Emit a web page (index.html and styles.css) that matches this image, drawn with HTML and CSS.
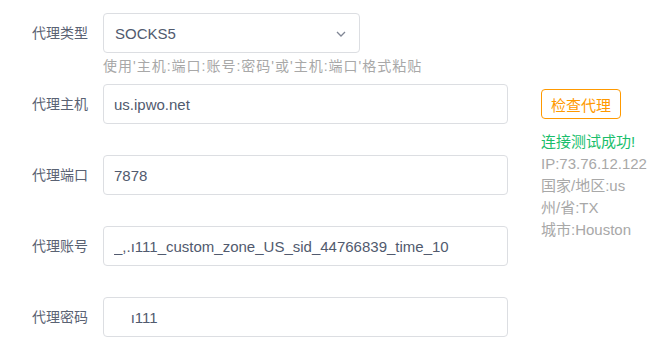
FILE: index.html
```html
<!DOCTYPE html>
<html lang="zh-CN">
<head>
  <meta charset="UTF-8" />
  <meta name="viewport" content="width=device-width, initial-scale=1.0" />
  <title>代理设置</title>
  <link rel="stylesheet" href="styles.css">
</head>
<body>
  <div class="proxy-panel">
    <form class="proxy-form">
      <div class="form-item has-hint">
        <label class="form-label">代理类型</label>
        <div class="form-field">
          <div class="select">
            <span class="select-value">SOCKS5</span>
            <svg class="select-arrow" width="10" height="6" viewBox="0 0 10 6"><path d="M1 1 L5 5 L9 1" fill="none" stroke="#808695" stroke-width="1.3"/></svg>
          </div>
          <div class="hint">使用'主机:端口:账号:密码'或'主机:端口'格式粘贴</div>
        </div>
      </div>
      <div class="form-item">
        <label class="form-label">代理主机</label>
        <input class="input" type="text" value="us.ipwo.net">
      </div>
      <div class="form-item">
        <label class="form-label">代理端口</label>
        <input class="input" type="text" value="7878">
      </div>
      <div class="form-item">
        <label class="form-label">代理账号</label>
        <input class="input" type="text" value="_,.ı111_custom_zone_US_sid_44766839_time_10">
      </div>
      <div class="form-item">
        <label class="form-label">代理密码</label>
        <input class="input" type="text" value="    ı111">
      </div>
    </form>

    <aside class="check">
      <button class="btn-check" type="button">检查代理</button>
      <div class="result">
        <div class="ok">连接测试成功!</div>
        <div>IP:73.76.12.122</div>
        <div>国家/地区:us</div>
        <div>州/省:TX</div>
        <div>城市:Houston</div>
      </div>
    </aside>
  </div>
</body>
</html>
```

FILE: styles.css
```css
:root {
  --text: #515a6e;
  --label: #5a6273;
  --border: #dcdee2;
  --muted: #a8a8a8;
  --green: #19be6b;
  --orange: #ff9900;
}
* { box-sizing: border-box; margin:0; padding:0; }
body {
  font-family: "Liberation Sans", "Noto Sans CJK SC", sans-serif;
  font-size: 14px;
  color: var(--text);
  background: #fff;
}
.proxy-panel { display:flex; align-items:flex-start; padding-top:13px; }
.proxy-form { width:508px; }
.form-item { display:flex; align-items:flex-start; margin-bottom:31px; }
.form-item.has-hint { margin-bottom:7px; }
.form-label {
  width:103px; padding-right:15px;
  text-align:right; line-height:40px; font-size:14px;
  color:var(--label);
}
.form-field { display:flex; flex-direction:column; }
.select {
  width:257px; height:40px;
  display:flex; align-items:center; justify-content:space-between;
  padding:0 13px 0 11px;
  border:1px solid var(--border); border-radius:4px;
  font-size:15px;
}
.select-arrow { margin-top:1px; }
.hint { margin-top:2px; line-height:22px; font-size:14px; letter-spacing:1px; color:var(--muted); white-space:nowrap; }
.input {
  width:405px; height:40px;
  padding:0 10px;
  border:1px solid var(--border); border-radius:4px;
  font-family: inherit; font-size:15px; color:var(--text);
  outline:none; background:#fff;
}
.check { margin-left:33px; padding-top:76px; }
.btn-check {
  width:80px; height:30px;
  background:#fff; color:var(--orange);
  border:1px solid var(--orange); border-radius:4px;
  font-family: inherit; font-size:15px; cursor:pointer;
}
.result { margin-top:12px; line-height:22px; color:var(--muted); font-size:15px; }
.result .ok { color:var(--green); }
```
